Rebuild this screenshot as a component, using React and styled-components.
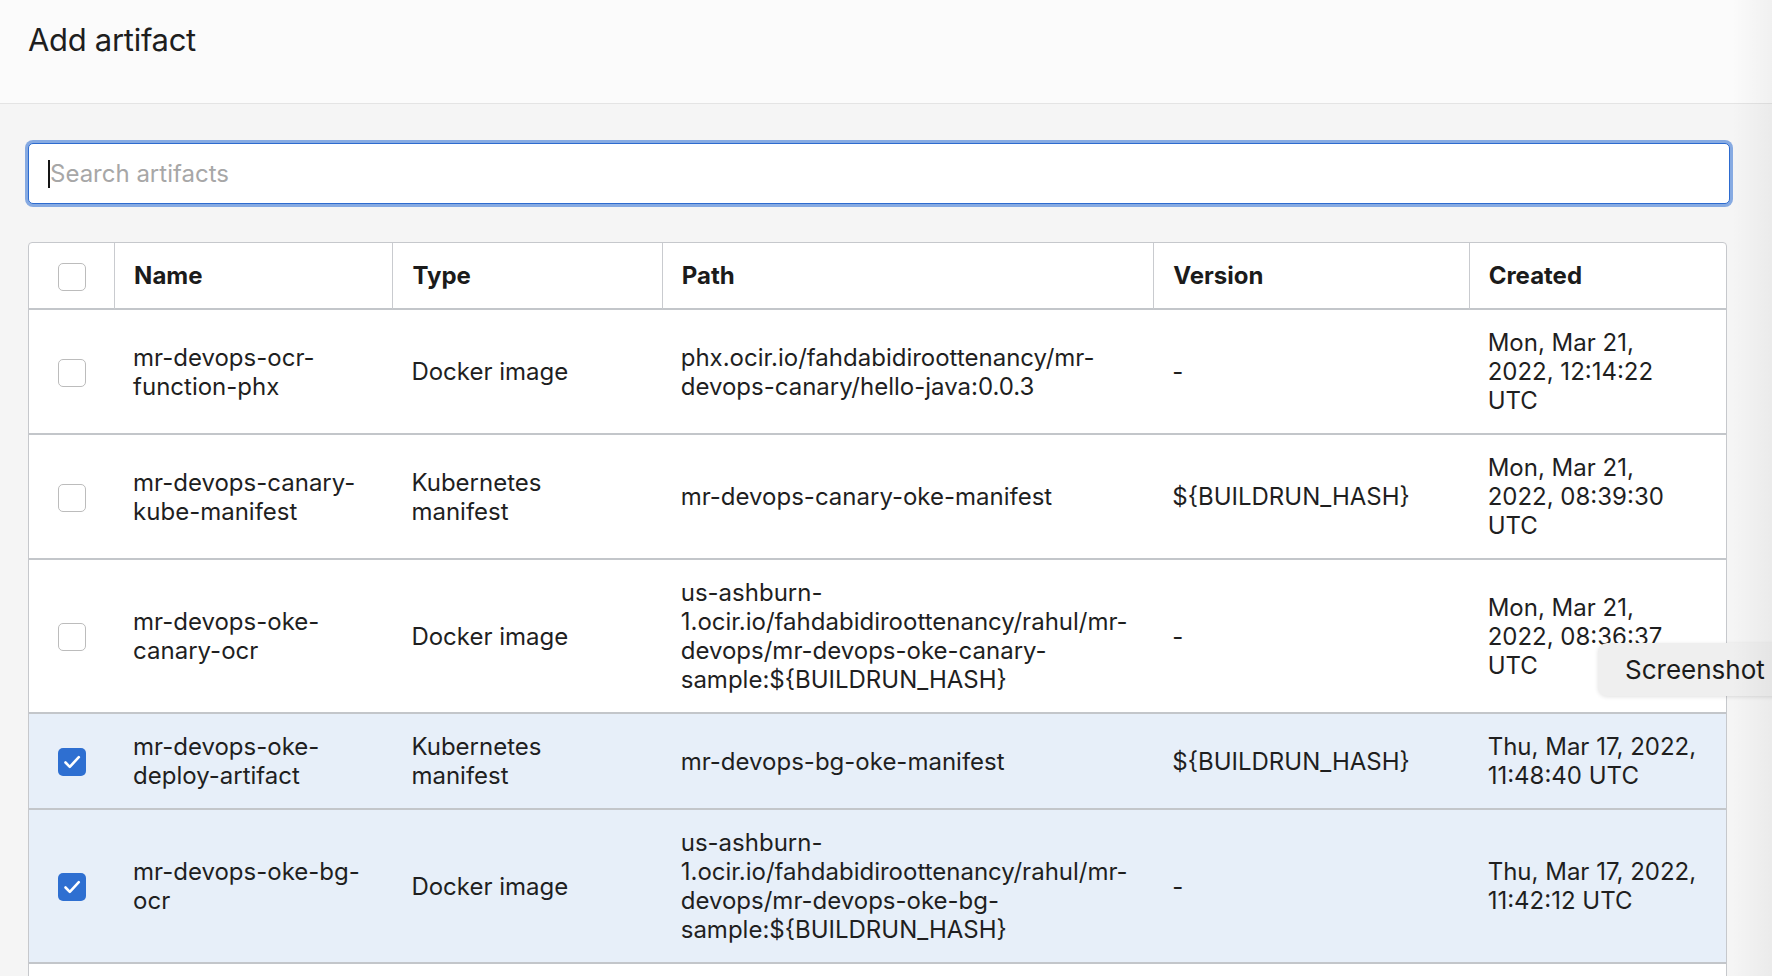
import React from "react";
import styled, { createGlobalStyle } from "styled-components";

const GlobalStyle = createGlobalStyle`
  html, body {
    margin: 0;
    padding: 0;
    background: #f5f5f5;
  }
  body {
    font-family: Inter, "Noto Sans", "Liberation Sans", sans-serif;
    color: #1f1f1f;
    -webkit-font-smoothing: antialiased;
  }
  * { box-sizing: border-box; }
`;

const Page = styled.div`
  position: relative;
  width: 100%;
  height: 100vh;
  overflow: hidden;
  background: #f5f5f5;
`;

const Header = styled.header`
  height: 104px;
  background: #fbfbfb;
  border-bottom: 1px solid #e4e4e4;
  padding: 21px 28px 0;
`;

const Title = styled.h1`
  margin: 0;
  font-size: 31px;
  line-height: 38px;
  font-weight: 400;
  letter-spacing: -0.3px;
  color: #1e1e1e;
`;

const Body = styled.main`
  padding: 39px 42px 0 28px;
  display: flex;
  flex-direction: column;
  gap: 38px;
`;

const SearchBox = styled.div`
  position: relative;
  height: 61px;
  background: #ffffff;
  border: 1px solid #2d6bcf;
  border-radius: 5px;
  box-shadow: 0 0 0 3px #86aae2;
`;

const SearchInput = styled.input`
  width: 100%;
  height: 100%;
  border: none;
  outline: none;
  background: transparent;
  padding: 0 0 0 21px;
  font-family: inherit;
  font-size: 24px;
  color: #1f1f1f;
  caret-color: transparent;
  &::placeholder {
    color: #a7a7a7;
  }
`;

const Caret = styled.span`
  position: absolute;
  left: 19px;
  top: 16px;
  width: 2px;
  height: 28px;
  background: #151515;
`;

const Card = styled.div`
  margin-right: 3px;
  background: #ffffff;
  border: 1px solid #c6c8cc;
  border-radius: 4px;
  overflow: hidden;
  padding-bottom: 60px;
`;

const Table = styled.table`
  width: 100%;
  table-layout: fixed;
  border-collapse: separate;
  border-spacing: 0;
  font-size: 24px;
  line-height: 29px;
`;

const HeadCell = styled.th`
  height: 67px;
  padding: ${(p) => (p.$check ? "0" : "0 19px")};
  text-align: ${(p) => (p.$check ? "center" : "left")};
  vertical-align: middle;
  font-weight: 700;
  color: #1b1b1b;
  border-bottom: 2px solid #c3c6ca;
  border-left: ${(p) => (p.$check ? "none" : "1px solid #c9cbcf")};
  white-space: nowrap;
`;

const Row = styled.tr`
  background: ${(p) => (p.$selected ? "#e7eff9" : "#ffffff")};
`;

const Cell = styled.td`
  padding: ${(p) => (p.$check ? "0" : "18px 19px")};
  text-align: ${(p) => (p.$check ? "center" : "left")};
  vertical-align: middle;
  border-bottom: 2px solid #c3c6ca;
  color: #1f1f1f;
`;

const Line = styled.span`
  display: block;
  white-space: nowrap;
`;

const Box = styled.span`
  display: inline-flex;
  align-items: center;
  justify-content: center;
  width: 28px;
  height: 28px;
  border-radius: 5px;
  vertical-align: middle;
  background: ${(p) => (p.$checked ? "#2e6fd1" : "#ffffff")};
  border: ${(p) => (p.$checked ? "none" : "1px solid #bcbcbc")};
`;

const Tooltip = styled.div`
  position: absolute;
  left: 1598px;
  top: 643px;
  width: 220px;
  height: 53px;
  padding-left: 27px;
  background: #efefef;
  border-radius: 9px;
  box-shadow: 0 1px 4px rgba(0, 0, 0, 0.12);
  font-size: 26px;
  line-height: 53px;
  color: #1b1b1b;
  white-space: nowrap;
`;

const EdgeShade = styled.div`
  position: absolute;
  top: 0;
  right: 0;
  bottom: 0;
  width: 40px;
  pointer-events: none;
  background: linear-gradient(to right, rgba(0, 0, 0, 0), rgba(0, 0, 0, 0.045));
`;

const Checkbox = ({ checked }) => (
  <Box $checked={checked}>
    {checked && (
      <svg width="28" height="28" viewBox="0 0 28 28" fill="none">
        <path
          d="M7.5 14.5 L11.8 18.8 L20.8 9.2"
          stroke="#ffffff"
          strokeWidth="2.6"
          strokeLinecap="round"
          strokeLinejoin="round"
        />
      </svg>
    )}
  </Box>
);

const Lines = ({ lines }) => lines.map((l, i) => <Line key={i}>{l}</Line>);

const columns = [
  { key: "check", width: 85 },
  { key: "name", label: "Name", width: 278 },
  { key: "type", label: "Type", width: 269 },
  { key: "path", label: "Path", width: 491 },
  { key: "version", label: "Version", width: 315 },
  { key: "created", label: "Created", width: 257 },
];

const rows = [
  {
    checked: false,
    name: ["mr-devops-ocr-", "function-phx"],
    type: ["Docker image"],
    path: ["phx.ocir.io/fahdabidiroottenancy/mr-", "devops-canary/hello-java:0.0.3"],
    version: ["-"],
    created: ["Mon, Mar 21,", "2022, 12:14:22", "UTC"],
  },
  {
    checked: false,
    name: ["mr-devops-canary-", "kube-manifest"],
    type: ["Kubernetes", "manifest"],
    path: ["mr-devops-canary-oke-manifest"],
    version: ["${BUILDRUN_HASH}"],
    created: ["Mon, Mar 21,", "2022, 08:39:30", "UTC"],
  },
  {
    checked: false,
    name: ["mr-devops-oke-", "canary-ocr"],
    type: ["Docker image"],
    path: [
      "us-ashburn-",
      "1.ocir.io/fahdabidiroottenancy/rahul/mr-",
      "devops/mr-devops-oke-canary-",
      "sample:${BUILDRUN_HASH}",
    ],
    version: ["-"],
    created: ["Mon, Mar 21,", "2022, 08:36:37", "UTC"],
  },
  {
    checked: true,
    name: ["mr-devops-oke-", "deploy-artifact"],
    type: ["Kubernetes", "manifest"],
    path: ["mr-devops-bg-oke-manifest"],
    version: ["${BUILDRUN_HASH}"],
    created: ["Thu, Mar 17, 2022,", "11:48:40 UTC"],
  },
  {
    checked: true,
    name: ["mr-devops-oke-bg-", "ocr"],
    type: ["Docker image"],
    path: [
      "us-ashburn-",
      "1.ocir.io/fahdabidiroottenancy/rahul/mr-",
      "devops/mr-devops-oke-bg-",
      "sample:${BUILDRUN_HASH}",
    ],
    version: ["-"],
    created: ["Thu, Mar 17, 2022,", "11:42:12 UTC"],
  },
];

export default function App() {
  return (
    <Page>
      <GlobalStyle />
      <Header>
        <Title>Add artifact</Title>
      </Header>
      <Body>
        <SearchBox>
          <SearchInput type="text" placeholder="Search artifacts" />
          <Caret />
        </SearchBox>
        <Card>
          <Table>
            <colgroup>
              {columns.map((c) => (
                <col key={c.key} style={{ width: c.width }} />
              ))}
            </colgroup>
            <thead>
              <tr>
                <HeadCell $check>
                  <Checkbox checked={false} />
                </HeadCell>
                {columns.slice(1).map((c) => (
                  <HeadCell key={c.key}>{c.label}</HeadCell>
                ))}
              </tr>
            </thead>
            <tbody>
              {rows.map((r, i) => (
                <Row key={i} $selected={r.checked}>
                  <Cell $check>
                    <Checkbox checked={r.checked} />
                  </Cell>
                  <Cell><Lines lines={r.name} /></Cell>
                  <Cell><Lines lines={r.type} /></Cell>
                  <Cell><Lines lines={r.path} /></Cell>
                  <Cell><Lines lines={r.version} /></Cell>
                  <Cell><Lines lines={r.created} /></Cell>
                </Row>
              ))}
            </tbody>
          </Table>
        </Card>
      </Body>
      <Tooltip>Screenshot</Tooltip>
      <EdgeShade />
    </Page>
  );
}
